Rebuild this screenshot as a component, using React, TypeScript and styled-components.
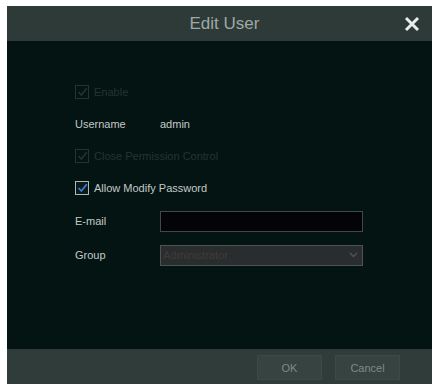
import React from "react";
import styled, { createGlobalStyle } from "styled-components";

const Global = createGlobalStyle`
  html, body { margin: 0; padding: 0; background: #ffffff; }
  body { font-family: "Liberation Sans", Arial, sans-serif; }
`;

const Dialog = styled.div`
  margin: 6px 0 0 7px;
  width: 425px;
  height: 378px;
  display: flex;
  flex-direction: column;
  background: #031413;
`;

const Header = styled.div`
  height: 35px;
  flex: none;
  background: #2d3a37;
  display: flex;
  align-items: center;
  justify-content: center;
  position: relative;
`;

const Title = styled.div`
  color: #9fa8a5;
  font-size: 17px;
  padding-left: 10px;
`;

const Close = styled.div`
  position: absolute;
  right: 12px;
  top: 10px;
  width: 16px;
  height: 16px;
`;

const Body = styled.div`
  flex: 1;
  padding: 35px 0 0 68px;
  display: flex;
  flex-direction: column;
`;

const Row = styled.div<{ $h?: number }>`
  height: ${(p) => p.$h ?? 32}px;
  display: flex;
  align-items: center;
  font-size: 11px;
`;

const Label = styled.span<{ $dim?: boolean }>`
  color: ${(p) => (p.$dim ? "#223431" : "#c3c8c7")};
  width: 85px;
  flex: none;
`;

const Value = styled.span`
  color: #c3c8c7;
`;

const CheckText = styled.span<{ $dim?: boolean }>`
  color: ${(p) => (p.$dim ? "#223431" : "#c3c8c7")};
  margin-left: 5px;
`;

const Box = styled.span<{ $dim?: boolean }>`
  width: 12px;
  height: 12px;
  border: 1px solid ${(p) => (p.$dim ? "#223330" : "#b0b7b6")};
  background: ${(p) => (p.$dim ? "transparent" : "#0b1a1a")};
  display: flex;
  align-items: center;
  justify-content: center;
  flex: none;
`;

const Input = styled.div`
  width: 201px;
  height: 19px;
  background: #030308;
  border: 1px solid #3f4a48;
`;

const Select = styled.div`
  width: 195px;
  height: 19px;
  background: #292d2d;
  border: 1px solid #4a5553;
  display: flex;
  align-items: center;
  justify-content: space-between;
  padding: 0 4px 0 2px;
  font-size: 11px;
  color: #433a3d;
`;

const Footer = styled.div`
  height: 35px;
  flex: none;
  background: #2f3c39;
  display: flex;
  align-items: center;
  justify-content: flex-end;
  gap: 13px;
  padding: 2px 32px 0 0;
  box-sizing: border-box;
`;

const Button = styled.div`
  width: 63px;
  height: 23px;
  border: 1px solid #3c4a47;
  background: #364340;
  color: #7f8a88;
  font-size: 11px;
  display: flex;
  align-items: center;
  justify-content: center;
`;

const Check = ({ dim }: { dim?: boolean }) => (
  <Box $dim={dim}>
    <svg width="11" height="10" viewBox="0 0 11 10">
      <path
        d="M1.5 5 L4.3 8 L9.8 1.2"
        fill="none"
        stroke={dim ? "#21332f" : "#3d7cd0"}
        strokeWidth="1.8"
      />
    </svg>
  </Box>
);

export default function App() {
  return (
    <>
      <Global />
      <Dialog>
        <Header>
          <Title>Edit User</Title>
          <Close>
            <svg width="16" height="16" viewBox="0 0 16 16">
              <path d="M2 2 L14 14 M14 2 L2 14" stroke="#e8eceb" strokeWidth="3" />
            </svg>
          </Close>
        </Header>
        <Body>
          <Row>
            <Check dim />
            <CheckText $dim>Enable</CheckText>
          </Row>
          <Row>
            <Label>Username</Label>
            <Value>admin</Value>
          </Row>
          <Row>
            <Check dim />
            <CheckText $dim>Close Permission Control</CheckText>
          </Row>
          <Row>
            <Check />
            <CheckText>Allow Modify Password</CheckText>
          </Row>
          <Row $h={34}>
            <Label>E-mail</Label>
            <Input />
          </Row>
          <Row $h={34}>
            <Label>Group</Label>
            <Select>
              <span>Administrator</span>
              <svg width="9" height="6" viewBox="0 0 9 6">
                <path d="M1 1 L4.5 4.5 L8 1" fill="none" stroke="#4e5756" strokeWidth="1.3" />
              </svg>
            </Select>
          </Row>
        </Body>
        <Footer>
          <Button>OK</Button>
          <Button>Cancel</Button>
        </Footer>
      </Dialog>
    </>
  );
}
